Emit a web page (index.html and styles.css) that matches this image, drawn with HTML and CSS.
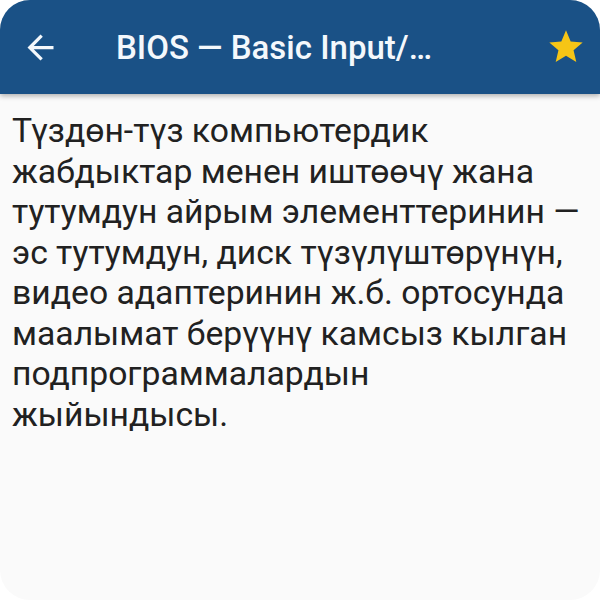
FILE: index.html
```html
<!DOCTYPE html>
<html>
<head>
<meta charset="utf-8">
<link rel="stylesheet" href="styles.css">
</head>
<body>
<div class="screen">
  <header class="bar">
    <span class="back">
      <svg width="39" height="39" viewBox="0 0 24 24"><path d="M20 11H7.83l5.59-5.59L12 4l-8 8 8 8 1.41-1.41L7.83 13H20v-2z" fill="#f4f8fc"/></svg>
    </span>
    <h1 class="title">BIOS — Basic Input/Output System</h1>
    <span class="star">
      <svg width="40" height="40" viewBox="0 0 24 24"><path d="M12 17.27L18.18 21l-1.64-7.03L22 9.24l-7.19-.61L12 2 9.19 8.63 2 9.24l5.46 4.73L5.82 21z" fill="#f6c516"/></svg>
    </span>
  </header>
  <main class="content">
    <p>Түздөн-түз компьютердик жабдыктар менен иштөөчү жана тутумдун айрым элементтеринин — эс тутумдун, диск түзүлүштөрүнүн, видео адаптеринин ж.б. ортосунда маалымат берүүнү камсыз кылган подпрограммалардын жыйындысы.</p>
  </main>
</div>
</body>
</html>
```
FILE: styles.css
```css
html, body {
  margin: 0;
  padding: 0;
  background: #ffffff;
}
.screen {
  width: 600px;
  height: 600px;
  border-radius: 30px;
  overflow: hidden;
  background: #fafafa;
  display: flex;
  flex-direction: column;
  font-family: Roboto, "Noto Sans", sans-serif;
}
.bar {
  height: 94px;
  flex: none;
  background: #1a5186;
  display: flex;
  align-items: center;
  box-shadow: 0 2px 5px rgba(0,0,0,0.3);
  position: relative;
  z-index: 1;
}
.back {
  width: 39px;
  height: 39px;
  margin-left: 21px;
  display: flex;
}
.title {
  margin: 0 0 0 56px;
  color: #f4f8fc;
  font-size: 33px;
  font-weight: 500;
  white-space: nowrap;
  overflow: hidden;
  text-overflow: ellipsis;
  width: 330px;
}
.star {
  margin-left: auto;
  margin-right: 14px;
  display: flex;
}
.content {
  padding: 17px 12px 0 12px;
}
.content p {
  margin: 0;
  font-size: 33.7px;
  line-height: 40.5px;
  color: #212121;
}
```
